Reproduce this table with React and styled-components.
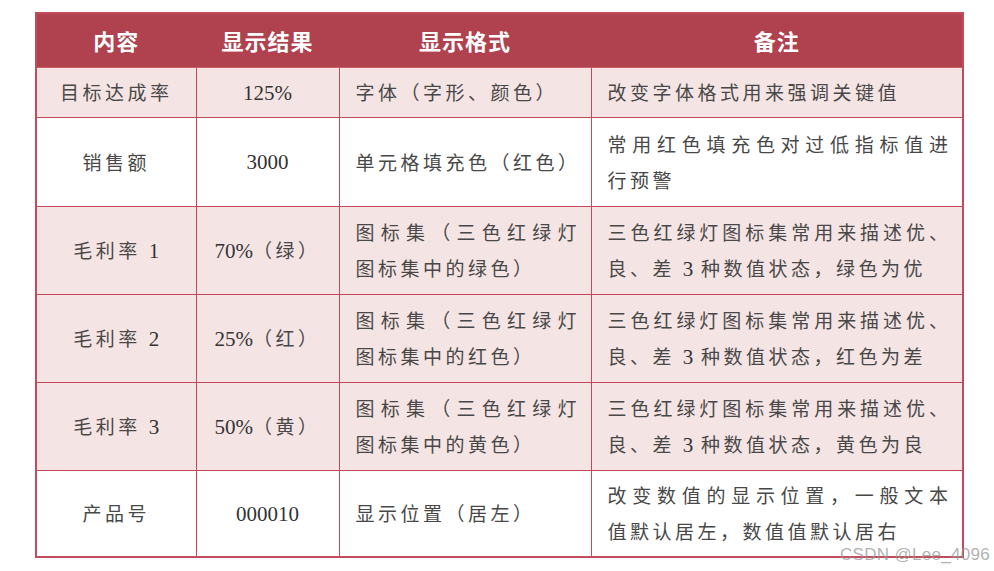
import { styled, createGlobalStyle } from "styled-components";

const GlobalStyle = createGlobalStyle`
  body {
    margin: 0px;
    background: #ffffff;
  }
`;

const Page = styled.div`
  position: relative;
  width: 994px;
  height: 571px;
  padding: 12px 0px 0px 35px;
  box-sizing: border-box;
  overflow: hidden;
`;

const Table = styled.table`
  border-collapse: collapse;
  table-layout: fixed;
  width: 927px;
  border: 2px solid #c24c5d;
  font-family: "Noto Sans CJK SC", sans-serif;
`;

const HeadRow = styled.tr`
  height: 54px;
  background-color: #b0424f;
`;

const HeadCell = styled.th`
  padding: 0px;
  color: #ffffff;
  font-size: 22px;
  font-weight: 700;
  letter-spacing: 1px;
  text-align: center;
  border: 1px solid #b0424f;
  border-bottom: 1px solid #c9606c;
`;

const Row = styled.tr`
  height: ${(props) => props.$h}px;
  background-color: ${(props) => (props.$shade ? "#f5e4e4" : "#ffffff")};
`;

const Cell = styled.td`
  border: 1px solid #c4485b;
  color: #484848;
  font-size: 19px;
  line-height: 36px;
  letter-spacing: 3.5px;
  vertical-align: middle;
  text-align: ${(props) => (props.$center ? "center" : "left")};
  padding: ${(props) => (props.$center ? "0px" : "0px 14px 0px 16px")};
`;

const Line = styled.span`
  display: block;
  text-align: justify;
  text-align-last: ${(props) => (props.$fill ? "justify" : "auto")};
  letter-spacing: ${(props) => (props.$fill ? "0px" : "inherit")};
`;

const Num = styled.span`
  font-family: "Liberation Serif", serif;
  font-size: 21px;
  letter-spacing: 0px;
  color: #333333;
`;

const Watermark = styled.div`
  position: absolute;
  right: 4px;
  bottom: 6px;
  font-family: "Liberation Sans", sans-serif;
  font-size: 17px;
  color: rgba(150, 150, 150, 0.75);
  letter-spacing: 0.3px;
`;

const cols = [160, 143, 252, 372];

const rows = [
  {
    h: 50,
    shade: true,
    name: "目标达成率",
    value: <Num>125%</Num>,
    format: [["字体（字形、颜色）"]],
    note: [["改变字体格式用来强调关键值"]],
  },
  {
    h: 89,
    shade: false,
    name: "销售额",
    value: <Num>3000</Num>,
    format: [["单元格填充色（红色）"]],
    note: [["常用红色填充色对过低指标值进", true], ["行预警"]],
  },
  {
    h: 88,
    shade: true,
    name: (
      <>
        毛利率 <Num>1</Num>
      </>
    ),
    value: (
      <>
        <Num>70%</Num>（绿）
      </>
    ),
    format: [["图标集（三色红绿灯", true], ["图标集中的绿色）"]],
    note: [
      ["三色红绿灯图标集常用来描述优、", true],
      [
        <>
          良、差 <Num>3</Num> 种数值状态，绿色为优
        </>,
      ],
    ],
  },
  {
    h: 88,
    shade: true,
    name: (
      <>
        毛利率 <Num>2</Num>
      </>
    ),
    value: (
      <>
        <Num>25%</Num>（红）
      </>
    ),
    format: [["图标集（三色红绿灯", true], ["图标集中的红色）"]],
    note: [
      ["三色红绿灯图标集常用来描述优、", true],
      [
        <>
          良、差 <Num>3</Num> 种数值状态，红色为差
        </>,
      ],
    ],
  },
  {
    h: 88,
    shade: true,
    name: (
      <>
        毛利率 <Num>3</Num>
      </>
    ),
    value: (
      <>
        <Num>50%</Num>（黄）
      </>
    ),
    format: [["图标集（三色红绿灯", true], ["图标集中的黄色）"]],
    note: [
      ["三色红绿灯图标集常用来描述优、", true],
      [
        <>
          良、差 <Num>3</Num> 种数值状态，黄色为良
        </>,
      ],
    ],
  },
  {
    h: 87,
    shade: false,
    name: "产品号",
    value: <Num>000010</Num>,
    format: [["显示位置（居左）"]],
    note: [["改变数值的显示位置，一般文本", true], ["值默认居左，数值值默认居右"]],
  },
];

const Lines = ({ lines }) =>
  lines.map(([text, fill], i) => (
    <Line key={i} $fill={fill}>
      {text}
    </Line>
  ));

const App = () => {
  return (
    <>
      <GlobalStyle />
      <Page>
        <Table>
          <colgroup>
            {cols.map((w, i) => (
              <col key={i} style={{ width: w }} />
            ))}
          </colgroup>
          <thead>
            <HeadRow>
              <HeadCell>内容</HeadCell>
              <HeadCell>显示结果</HeadCell>
              <HeadCell>显示格式</HeadCell>
              <HeadCell>备注</HeadCell>
            </HeadRow>
          </thead>
          <tbody>
            {rows.map((row, i) => (
              <Row key={i} $h={row.h} $shade={row.shade}>
                <Cell $center>{row.name}</Cell>
                <Cell $center>{row.value}</Cell>
                <Cell>
                  <Lines lines={row.format} />
                </Cell>
                <Cell>
                  <Lines lines={row.note} />
                </Cell>
              </Row>
            ))}
          </tbody>
        </Table>
        <Watermark>CSDN @Lee_4096</Watermark>
      </Page>
    </>
  );
};

export default App;
